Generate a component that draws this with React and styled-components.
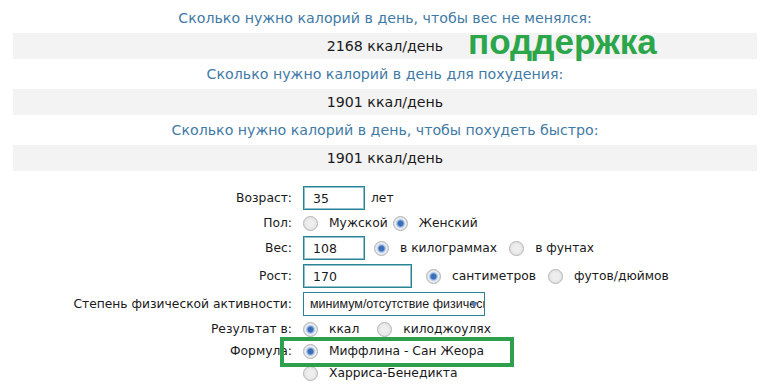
import React from "react";
import styled, { createGlobalStyle } from "styled-components";

const GlobalStyle = createGlobalStyle`
  body {
    margin: 0;
    background: #fff;
    font-family: "DejaVu Sans", Verdana, sans-serif;
    font-size: 12.3px;
    color: #1a1a1a;
  }
`;

const Page = styled.div`
  padding: 3px 3px 0 13px;
`;

const Results = styled.div`
  display: flex;
  flex-direction: column;
  font-size: 14.2px;
`;

const Question = styled.div`
  height: 30px;
  display: flex;
  align-items: center;
  justify-content: center;
  color: #3f7aa6;
`;

const ValueBar = styled.div`
  position: relative;
  height: 26px;
  display: flex;
  align-items: center;
  justify-content: center;
  background: #f3f3f3;
`;

const Note = styled.span`
  position: absolute;
  left: 455px;
  top: -11px;
  font-family: "Liberation Sans", Arial, sans-serif;
  font-weight: bold;
  font-size: 35px;
  color: #2ba64a;
`;

const Form = styled.div`
  position: relative;
  margin-top: 13px;
  display: grid;
  grid-template-columns: 279px 1fr;
  column-gap: 11px;
`;

const Label = styled.div`
  display: flex;
  align-items: center;
  justify-content: flex-end;
  height: ${(p) => (p.$tall ? 28 : 22)}px;
`;

const Controls = styled.div`
  display: flex;
  align-items: center;
  height: ${(p) => (p.$tall ? 28 : 22)}px;
`;

const TextBox = styled.div`
  box-sizing: border-box;
  width: ${(p) => p.$w}px;
  height: 24px;
  border: 1px solid #2a8394;
  box-shadow: inset 0 0 0 1px #8fc2cc;
  padding: 0 9px;
  display: flex;
  align-items: center;
  font-size: 12.5px;
`;

const Unit = styled.span`
  margin-left: 6px;
`;

const Option = styled.span`
  display: flex;
  align-items: center;
  margin-left: ${(p) => p.$gap || 0}px;
`;

const Radio = styled.span`
  box-sizing: border-box;
  width: 15px;
  height: 15px;
  border-radius: 50%;
  border: 1px solid #b4b4b4;
  background: ${(p) =>
    p.$on
      ? "radial-gradient(circle, #3d6fb8 0 2.5px, #9ab8e0 3.5px, #e9eef6 5px, #dcdcdc 7px)"
      : "radial-gradient(circle, #eeeeee 0 3px, #e2e2e2 7px)"};
  margin-right: 11px;
  flex: none;
`;

const SelectBox = styled.div`
  position: relative;
  box-sizing: border-box;
  width: 182px;
  height: 24px;
  border: 1px solid #2a8394;
  padding-left: 6px;
  display: flex;
  align-items: center;
  overflow: hidden;
  white-space: nowrap;
  font-family: "Liberation Sans", Arial, sans-serif;
  font-size: 12.5px;
`;

const Arrow = styled.span`
  position: absolute;
  right: 6px;
  top: 9px;
  width: 0;
  height: 0;
  border-left: 4px solid transparent;
  border-right: 4px solid transparent;
  border-top: 6px solid #5b7fa8;
`;

const Highlight = styled.div`
  position: absolute;
  left: 267px;
  top: 153px;
  width: 234px;
  height: 30px;
  box-sizing: border-box;
  border: 4px solid #2e9f4b;
  pointer-events: none;
`;

const results = [
  ["Сколько нужно калорий в день, чтобы вес не менялся:", "2168 ккал/день", "поддержка"],
  ["Сколько нужно калорий в день для похудения:", "1901 ккал/день"],
  ["Сколько нужно калорий в день, чтобы похудеть быстро:", "1901 ккал/день"],
];

export default function App() {
  return (
    <Page>
      <GlobalStyle />
      <Results>
        {results.map(([q, v, note]) => (
          <React.Fragment key={q}>
            <Question>{q}</Question>
            <ValueBar>
              {v}
              {note && <Note>{note}</Note>}
            </ValueBar>
          </React.Fragment>
        ))}
      </Results>

      <Form>
        <Label $tall>Возраст:</Label>
        <Controls $tall>
          <TextBox $w={62}>35</TextBox>
          <Unit>лет</Unit>
        </Controls>

        <Label>Пол:</Label>
        <Controls>
          <Option><Radio />Мужской</Option>
          <Option $gap={5}><Radio $on />Женский</Option>
        </Controls>

        <Label $tall>Вес:</Label>
        <Controls $tall>
          <TextBox $w={62}>108</TextBox>
          <Option $gap={9}><Radio $on />в килограммах</Option>
          <Option $gap={12}><Radio />в фунтах</Option>
        </Controls>

        <Label $tall>Рост:</Label>
        <Controls $tall>
          <TextBox $w={109}>170</TextBox>
          <Option $gap={14}><Radio $on />сантиметров</Option>
          <Option $gap={12}><Radio />футов/дюймов</Option>
        </Controls>

        <Label $tall>Степень физической активности:</Label>
        <Controls $tall>
          <SelectBox>
            минимум/отсутствие физической нагрузки
            <Arrow />
          </SelectBox>
        </Controls>

        <Label>Результат в:</Label>
        <Controls>
          <Option><Radio $on />ккал</Option>
          <Option $gap={18}><Radio />килоджоулях</Option>
        </Controls>

        <Label>Формула:</Label>
        <Controls>
          <Option><Radio $on />Миффлина - Сан Жеора</Option>
        </Controls>

        <Label />
        <Controls>
          <Option><Radio />Харриса-Бенедикта</Option>
        </Controls>

        <Highlight />
      </Form>
    </Page>
  );
}
